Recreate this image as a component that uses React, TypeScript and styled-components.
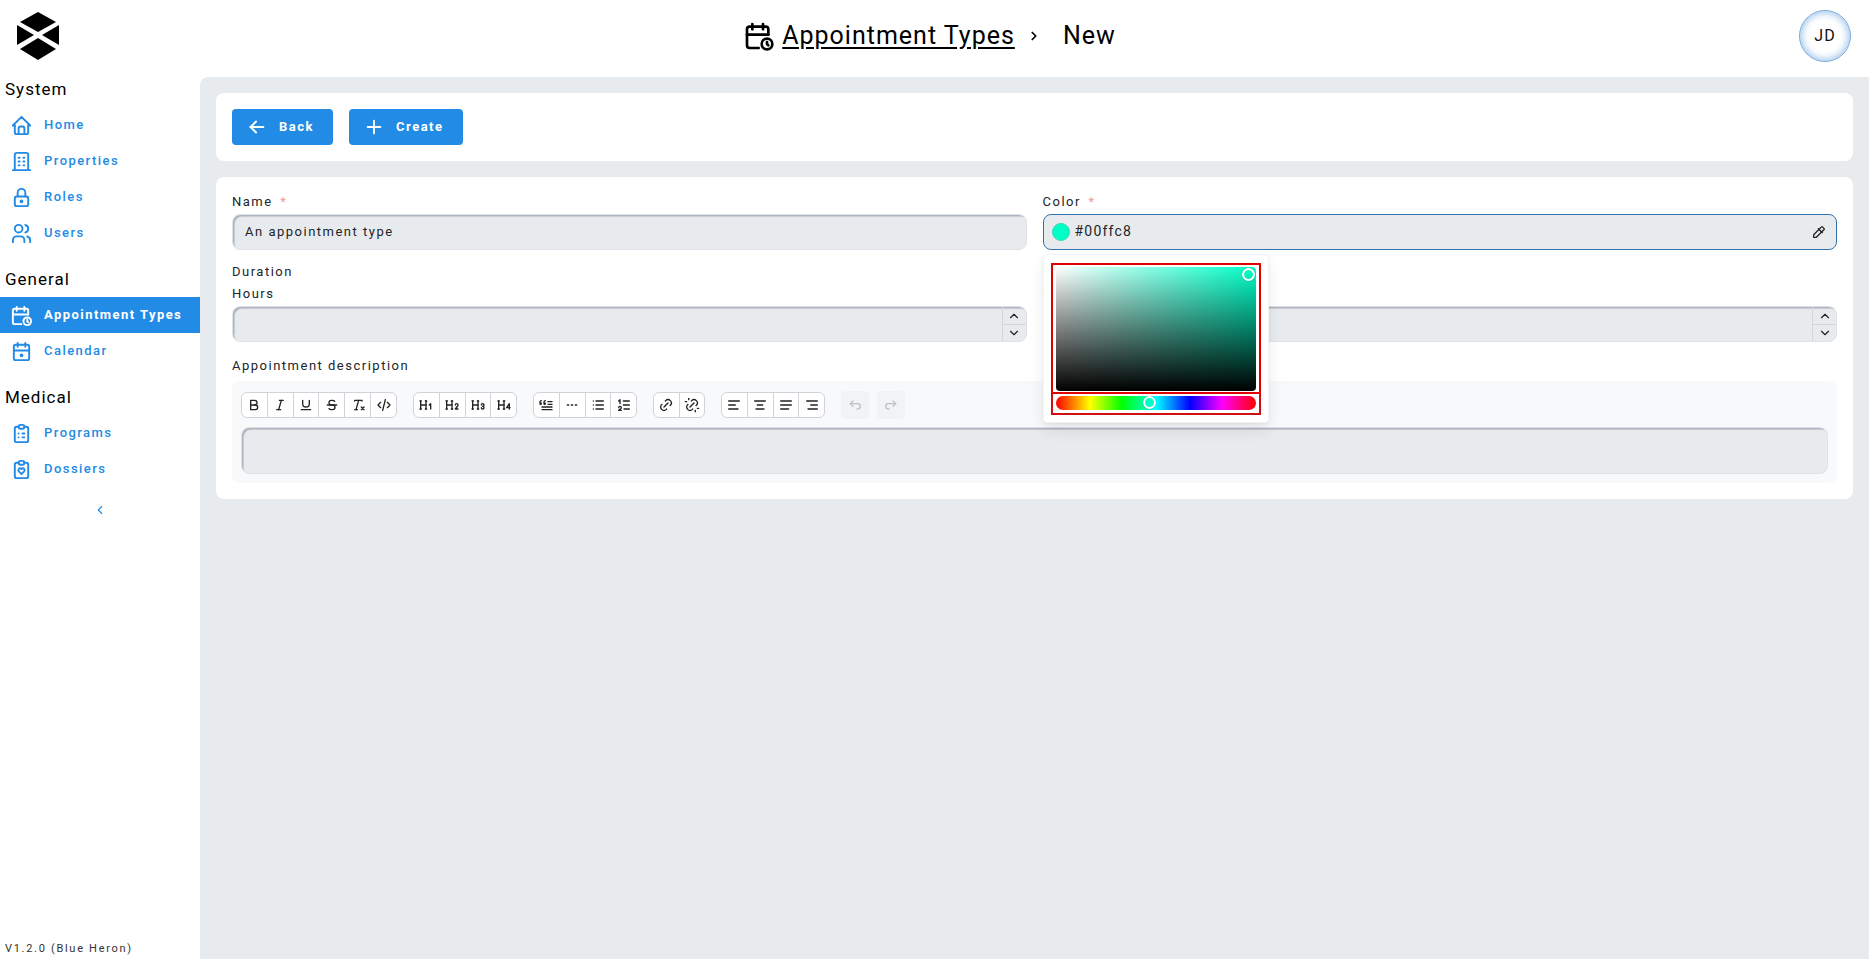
import React from 'react';
import styled, { createGlobalStyle } from 'styled-components';
import {
  TbAlignCenter,
  TbAlignJustified,
  TbAlignLeft,
  TbAlignRight,
  TbArrowBackUp,
  TbArrowForwardUp,
  TbArrowLeft,
  TbBlockquote,
  TbBold,
  TbBuilding,
  TbCalendarDue,
  TbCalendarTime,
  TbChevronDown,
  TbChevronLeft,
  TbChevronRight,
  TbChevronUp,
  TbClearFormatting,
  TbClipboardHeart,
  TbClipboardList,
  TbCode,
  TbColorPicker,
  TbH1,
  TbH2,
  TbH3,
  TbH4,
  TbHome,
  TbItalic,
  TbLineDashed,
  TbLink,
  TbList,
  TbListNumbers,
  TbLock,
  TbPlus,
  TbStrikethrough,
  TbUnderline,
  TbUnlink,
  TbUsers,
} from 'react-icons/tb';

const blue = '#228be6';
const gray = '#e8ebee';
const font = '"Roboto", "Liberation Sans", sans-serif';

const GlobalStyle = createGlobalStyle`
  html, body {
    margin: 0;
    background: #fff;
    color: #111;
    font-family: ${font};
  }
  * {
    box-sizing: border-box;
  }
`;

const Page = styled.div`
  display: flex;
  flex-direction: column;
  height: 959px;
  overflow: hidden;
`;

const Header = styled.header`
  display: grid;
  grid-template-columns: 1fr auto 1fr;
  align-items: center;
  height: 77px;
  flex: none;
  padding: 0 18px 6px 16px;
`;

const Crumbs = styled.div`
  display: flex;
  align-items: center;
  font-size: 25px;
  letter-spacing: 1px;
  color: #000;
  margin-left: -8px;
`;

const CrumbLink = styled.a`
  color: #000;
  text-decoration: underline;
  text-underline-offset: 3px;
  margin-left: 7px;
`;

const CrumbSep = styled.span`
  display: flex;
  margin: 0 22px 0 12px;
`;

const Avatar = styled.div`
  justify-self: end;
  width: 52px;
  height: 52px;
  border-radius: 50%;
  display: flex;
  align-items: center;
  justify-content: center;
  font-size: 16px;
  letter-spacing: 1px;
  background: #fff;
  border: 1px solid #74a9dc;
  box-shadow: inset 0 0 7px 2px #a6c9ec;
`;

const Body = styled.div`
  display: flex;
  flex: 1;
  min-height: 0;
`;

const Sidebar = styled.nav`
  width: 200px;
  flex: none;
  display: flex;
  flex-direction: column;
  padding-top: 1px;
`;

const SectionTitle = styled.div`
  height: 22px;
  line-height: 22px;
  margin: 0 0 7px 5px;
  font-size: 17px;
  letter-spacing: 1px;
  color: #000;
`;

const Section = styled.div`
  margin-bottom: 17px;
`;

const NavItem = styled.a<{ $active?: boolean }>`
  display: flex;
  align-items: center;
  gap: 11px;
  height: 36px;
  padding-left: 10px;
  font-size: 13px;
  letter-spacing: 1.45px;
  font-weight: ${p => (p.$active ? 700 : 500)};
  color: ${p => (p.$active ? '#fff' : blue)};
  background: ${p => (p.$active ? blue : 'transparent')};
`;

// the text sits a little above the centre of its row
const RowText = styled.span`
  margin-bottom: 2px;
`;

const Collapse = styled.div`
  display: flex;
  justify-content: center;
  margin-top: -1px;
  color: ${blue};
`;

const Version = styled.div`
  margin-top: auto;
  padding: 0 0 4px 5px;
  font-size: 11px;
  letter-spacing: 1.7px;
  color: #333;
`;

const Main = styled.main`
  flex: 1;
  min-width: 0;
  display: flex;
  flex-direction: column;
  gap: 16px;
  padding: 16px;
  background: ${gray};
  border-top-left-radius: 8px;
`;

const Card = styled.section`
  background: #fff;
  border-radius: 8px;
  padding: 16px;
`;

const FormCard = styled(Card)`
  padding-top: 15px;
`;

const Actions = styled.div`
  display: flex;
  gap: 16px;
`;

const Button = styled.button`
  display: flex;
  align-items: center;
  gap: 11px;
  height: 36px;
  padding: 0 19px 0 14px;
  border: 0;
  border-radius: 4px;
  background: ${blue};
  color: #fff;
  font-family: ${font};
  font-size: 13px;
  font-weight: 700;
  letter-spacing: 1.5px;
`;

const FormGrid = styled.div`
  display: grid;
  grid-template-columns: 1fr 1fr;
  column-gap: 16px;
`;

const Field = styled.div`
  position: relative;
  min-width: 0;
`;

const Wide = styled.div<{ $gap: number }>`
  grid-column: 1 / -1;
  margin-top: ${p => p.$gap}px;
`;

const Label = styled.label<{ $required?: boolean }>`
  display: block;
  height: 19px;
  line-height: 19px;
  margin-bottom: 3px;
  font-size: 13px;
  letter-spacing: 1.5px;
  color: #212529;
  ${p =>
    p.$required &&
    `
    &::after {
      content: ' *';
      margin-left: 3px;
      color: #f29a9a;
    }
  `}
`;

const InputBox = styled.div<{ $focused?: boolean }>`
  position: relative;
  display: flex;
  align-items: center;
  gap: 5px;
  height: 36px;
  padding-left: 12px;
  border-radius: 8px;
  background: ${gray};
  font-size: 13px;
  letter-spacing: 1.5px;
  color: #212529;
  ${p =>
    p.$focused
      ? `border: 1px solid #2f72ad; padding-left: 8px; font-size: 14px; letter-spacing: 1.2px;`
      : `border: 1px solid #dfe3e7; box-shadow: inset 2px 2px 1px -0.5px #aab2ba;`}
`;

const Swatch = styled.span`
  width: 18px;
  height: 18px;
  border-radius: 50%;
  background: #00ffc8;
  border: 1px solid #33d8b4;
`;

const PickerIcon = styled.span`
  margin-left: auto;
  margin-right: 9px;
  display: flex;
  color: #222;
`;

const Stepper = styled.div`
  position: absolute;
  top: 0;
  right: 0;
  bottom: 0;
  width: 24px;
  display: grid;
  grid-template-rows: 1fr 1fr;
  border-left: 1px solid #d3d7db;
`;

const Step = styled.span`
  display: flex;
  align-items: center;
  justify-content: center;
  color: #222;
  & + & {
    border-top: 1px solid #d3d7db;
  }
`;

const Popover = styled.div`
  position: absolute;
  z-index: 5;
  top: 62px;
  left: 0;
  width: 226px;
  padding: 8px 7px 7px;
  background: #fff;
  border: 1px solid #f1f3f5;
  border-radius: 4px;
  box-shadow: 0 1px 3px rgba(0, 0, 0, 0.05), 0 8px 16px rgba(0, 0, 0, 0.08);
`;

const SaturationFrame = styled.div`
  border: 2px solid #e00000;
  padding: 2px 3px 1px;
`;

const Saturation = styled.div`
  position: relative;
  height: 124px;
  border-radius: 4px;
  background: linear-gradient(0deg, #000, transparent),
    linear-gradient(90deg, #fff, transparent), hsl(167, 100%, 50%);
`;

const HueFrame = styled.div`
  border: 2px solid #d01010;
  border-top: 0;
  padding: 2px 3px 3px;
`;

const Hue = styled.div`
  position: relative;
  height: 14px;
  border-radius: 7px;
  background: linear-gradient(
    90deg,
    #f00 0%,
    #ff0 17%,
    #0f0 33%,
    #0ff 50%,
    #00f 67%,
    #f0f 83%,
    #f00 100%
  );
`;

const Thumb = styled.span<{ $fill?: boolean }>`
  position: absolute;
  width: 13px;
  height: 13px;
  border-radius: 50%;
  border: 2px solid #fff;
  background: ${p => (p.$fill ? '#00ffc8' : 'transparent')};
  box-shadow: 0 0 1px rgba(0, 0, 0, 0.5);
`;

const SaturationThumb = styled(Thumb)`
  top: 1px;
  right: 1px;
`;

const HueThumb = styled(Thumb)`
  top: 0;
  left: 87px;
`;

const Editor = styled.div`
  margin-top: 6px;
  height: 102px;
  padding: 10px 9px 9px;
  background: #f8f9fa;
  border-radius: 8px;
`;

const Toolbar = styled.div`
  display: flex;
  gap: 16px;
  align-items: center;
  height: 27px;
`;

const ToolGroup = styled.div<{ $count: number }>`
  display: flex;
  width: ${p => p.$count * 26}px;
  height: 26px;
  background: #fff;
  border: 1px solid #ced4da;
  border-radius: 6px;
`;

const ToolButton = styled.span`
  flex: 1;
  display: flex;
  align-items: center;
  justify-content: center;
  color: #222;
  & + & {
    border-left: 1px solid #ced4da;
  }
`;

const History = styled.div`
  display: flex;
  gap: 8px;
`;

const HistoryButton = styled.span`
  width: 28px;
  height: 28px;
  border-radius: 4px;
  display: flex;
  align-items: center;
  justify-content: center;
  background: #f1f3f5;
  color: #bcc2c8;
`;

const EditorContent = styled.div`
  height: 47px;
  margin-top: 9px;
  border-radius: 8px;
  background: ${gray};
  border: 1px solid #dfe3e7;
  box-shadow: inset 2px 2px 1px -0.5px #aab2ba;
`;

const tools = [
  [TbBold, TbItalic, TbUnderline, TbStrikethrough, TbClearFormatting, TbCode],
  [TbH1, TbH2, TbH3, TbH4],
  [TbBlockquote, TbLineDashed, TbList, TbListNumbers],
  [TbLink, TbUnlink],
  [TbAlignLeft, TbAlignCenter, TbAlignJustified, TbAlignRight],
];

const Logo = () => (
  <svg width="44" height="50" viewBox="15 12 44 50">
    <path d="M37 13 55 23 37 33 19 23Z" />
    <path d="M16 26 33 36 16 46Z" />
    <path d="M58 26 41 36 58 46Z" />
    <path d="M37 39 55 50 37 61 19 50Z" />
  </svg>
);

const Spinner = () => (
  <Stepper>
    <Step>
      <TbChevronUp size={14} />
    </Step>
    <Step>
      <TbChevronDown size={14} />
    </Step>
  </Stepper>
);

const App = () => (
  <Page>
    <GlobalStyle />
    <Header>
      <Logo />
      <Crumbs>
        <TbCalendarTime size={32} />
        <CrumbLink>Appointment Types</CrumbLink>
        <CrumbSep>
          <TbChevronRight size={14} strokeWidth={3} />
        </CrumbSep>
        <span>New</span>
      </Crumbs>
      <Avatar>JD</Avatar>
    </Header>
    <Body>
      <Sidebar>
        <Section>
          <SectionTitle>System</SectionTitle>
          <NavItem>
            <TbHome size={23} />
            <RowText>Home</RowText>
          </NavItem>
          <NavItem>
            <TbBuilding size={23} />
            <RowText>Properties</RowText>
          </NavItem>
          <NavItem>
            <TbLock size={23} />
            <RowText>Roles</RowText>
          </NavItem>
          <NavItem>
            <TbUsers size={23} />
            <RowText>Users</RowText>
          </NavItem>
        </Section>
        <Section>
          <SectionTitle>General</SectionTitle>
          <NavItem $active>
            <TbCalendarTime size={23} />
            <RowText>Appointment Types</RowText>
          </NavItem>
          <NavItem>
            <TbCalendarDue size={23} />
            <RowText>Calendar</RowText>
          </NavItem>
        </Section>
        <Section>
          <SectionTitle>Medical</SectionTitle>
          <NavItem>
            <TbClipboardList size={23} />
            <RowText>Programs</RowText>
          </NavItem>
          <NavItem>
            <TbClipboardHeart size={23} />
            <RowText>Dossiers</RowText>
          </NavItem>
        </Section>
        <Collapse>
          <TbChevronLeft size={14} />
        </Collapse>
        <Version>V1.2.0 (Blue Heron)</Version>
      </Sidebar>
      <Main>
        <Card>
          <Actions>
            <Button>
              <TbArrowLeft size={22} />
              <RowText>Back</RowText>
            </Button>
            <Button>
              <TbPlus size={22} />
              <RowText>Create</RowText>
            </Button>
          </Actions>
        </Card>
        <FormCard>
          <FormGrid>
            <Field>
              <Label $required>Name</Label>
              <InputBox>
                <RowText>An appointment type</RowText>
              </InputBox>
            </Field>
            <Field>
              <Label $required>Color</Label>
              <InputBox $focused>
                <Swatch />
                <RowText>#00ffc8</RowText>
                <PickerIcon>
                  <TbColorPicker size={16} />
                </PickerIcon>
              </InputBox>
              <Popover>
                <SaturationFrame>
                  <Saturation>
                    <SaturationThumb />
                  </Saturation>
                </SaturationFrame>
                <HueFrame>
                  <Hue>
                    <HueThumb $fill />
                  </Hue>
                </HueFrame>
              </Popover>
            </Field>
            <Wide $gap={12}>
              <Label>Duration</Label>
            </Wide>
            <Field>
              <Label>Hours</Label>
              <InputBox>
                <Spinner />
              </InputBox>
            </Field>
            <Field>
              <Label>Minutes</Label>
              <InputBox>
                <Spinner />
              </InputBox>
            </Field>
            <Wide $gap={14}>
              <Label>Appointment description</Label>
              <Editor>
                <Toolbar>
                  {tools.map((group, i) => (
                    <ToolGroup key={i} $count={group.length}>
                      {group.map((Icon, j) => (
                        <ToolButton key={j}>
                          <Icon size={16} />
                        </ToolButton>
                      ))}
                    </ToolGroup>
                  ))}
                  <History>
                    <HistoryButton>
                      <TbArrowBackUp size={16} />
                    </HistoryButton>
                    <HistoryButton>
                      <TbArrowForwardUp size={16} />
                    </HistoryButton>
                  </History>
                </Toolbar>
                <EditorContent />
              </Editor>
            </Wide>
          </FormGrid>
        </FormCard>
      </Main>
    </Body>
  </Page>
);

export default App;
